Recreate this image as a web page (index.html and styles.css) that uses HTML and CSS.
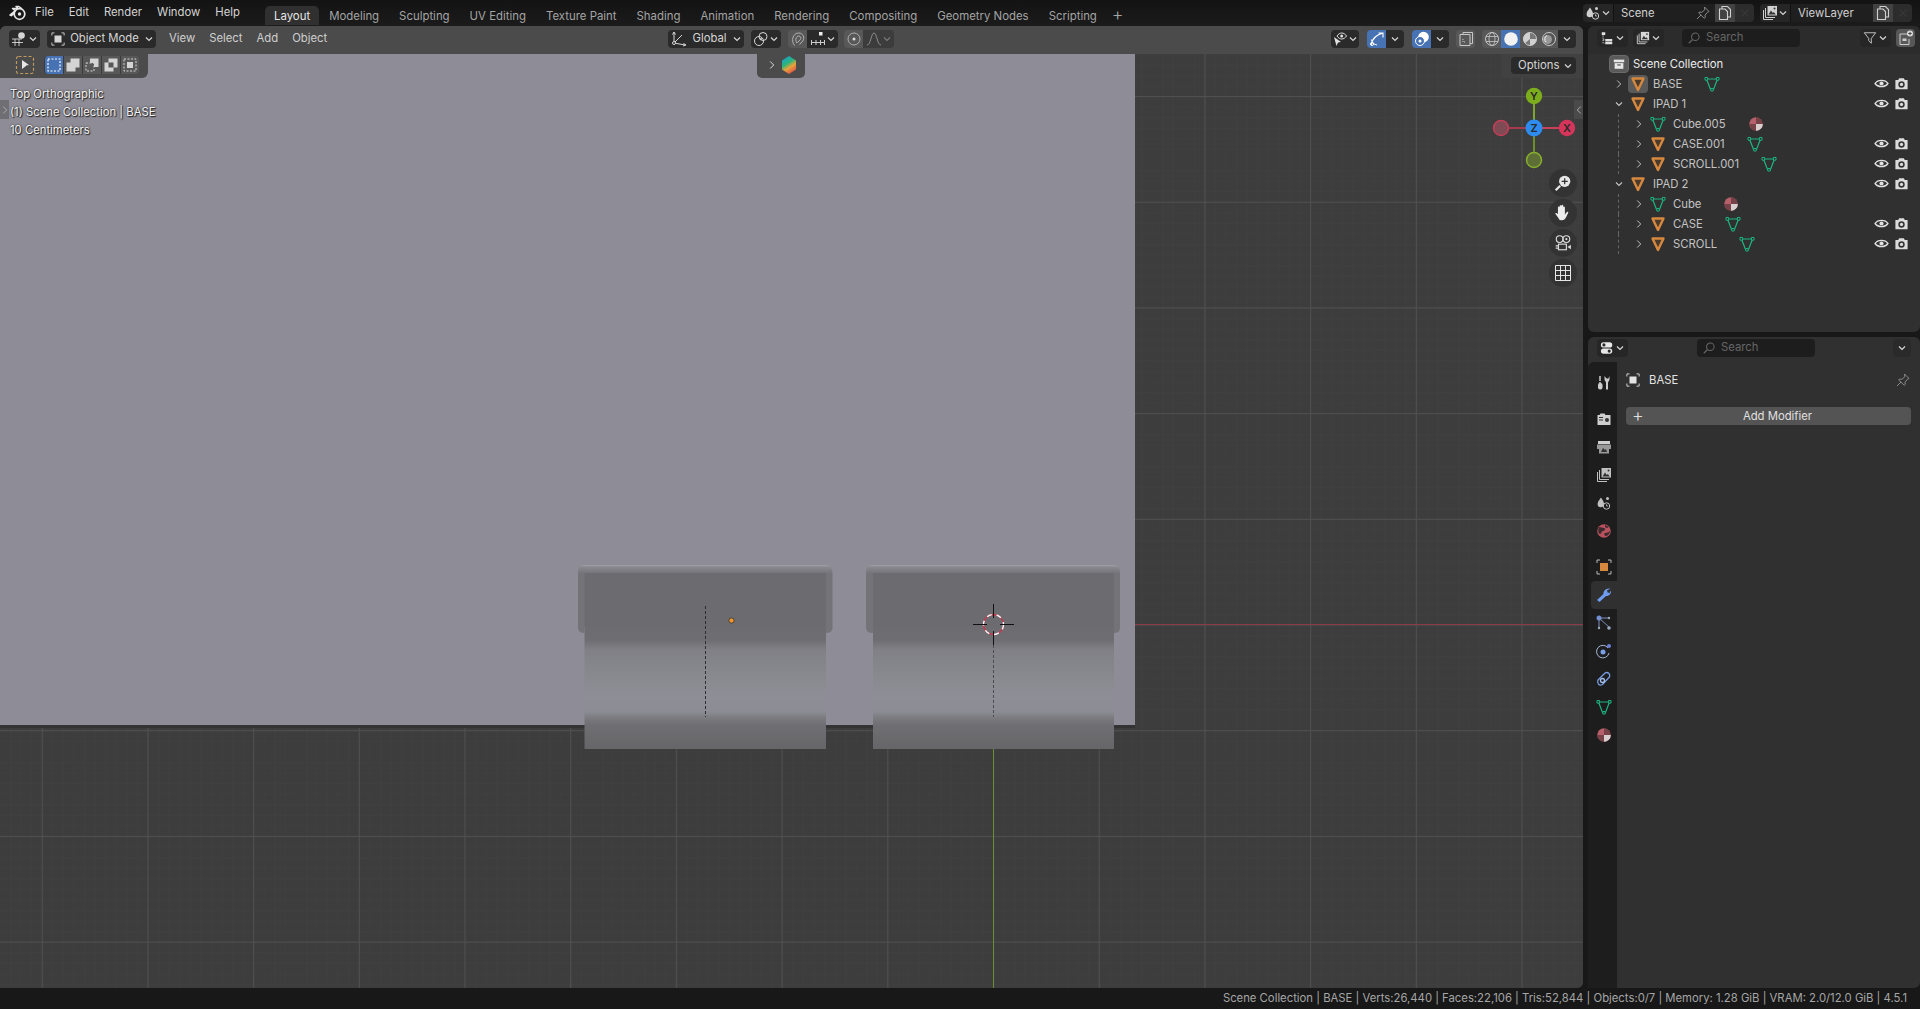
FILE: index.html
```html
<!DOCTYPE html>
<html lang="en">
<head>
    <meta charset="UTF-8">
    <meta name="viewport" content="width=device-width, initial-scale=1.0">
    <title>Blender</title>
    <link rel="stylesheet" href="styles.css">
</head>
<body>
    <svg class="sprites" aria-hidden="true">
        <defs><linearGradient id="hexfill" x1=".25" y1="0" x2=".75" y2="1"><stop offset="0" stop-color="#17a0d0"/><stop offset=".38" stop-color="#2bb57a"/><stop offset=".62" stop-color="#e8a23a"/><stop offset="1" stop-color="#e0484a"/></linearGradient></defs>
        <symbol id="i-logo" viewBox="0 0 18 16"><circle cx="10.500" cy="9" r="5.300" fill="none" stroke="currentColor" stroke-width="1.700"/><circle cx="10.500" cy="9" r="1.700" fill="currentColor"/><path d="M13 3.800L9.800 1.500H7l2.300 2H3.500l2.800 2.200L1 10l1.300.7 3.500-2.800" fill="none" stroke="currentColor" stroke-width="1.500" stroke-linejoin="round"/></symbol>
        <symbol id="i-chev-d" viewBox="0 0 10 10"><path d="M2 3.500l3 3 3-3" fill="none" stroke="currentColor" stroke-width="1.200"/></symbol>
        <symbol id="i-chev-r" viewBox="0 0 10 10"><path d="M3.200 1.500l3.500 3.500-3.500 3.500" fill="none" stroke="currentColor" stroke-width="1"/></symbol>
        <symbol id="i-obj" viewBox="0 0 16 16"><path d="M2.500 2.500h11L8 14z" fill="#4a3a2c" stroke="#d6883f" stroke-width="2.400" stroke-linejoin="round"/></symbol>
        <symbol id="i-mesh" viewBox="0 0 16 16"><path d="M2.500 3h11l-4 10.500h-3z" fill="none" stroke="#1db683" stroke-width="1.200"/><path d="M1 1.500h2.600v2.600H1zM12.400 1.500H15v2.600h-2.600zM6.800 12.500h2.400V15H6.800z" fill="#262626" stroke="#1db683"/></symbol>
        <symbol id="i-mat" viewBox="0 0 16 16"><circle cx="8" cy="8" r="6.800" fill="#b5606a"/><path d="M8 8V1.200A6.800 6.800 0 0 1 14.800 8zM8 8v6.800A6.800 6.800 0 0 1 1.200 8z" fill="#2a1e20" opacity=".45"/><path d="M8 8h6.800A6.800 6.800 0 0 1 8 14.800z" fill="#d8cfd0"/></symbol>
        <symbol id="i-eye" viewBox="0 0 16 16"><path d="M1.200 8C4 3.600 12 3.600 14.800 8 12 12.400 4 12.400 1.200 8z" fill="none" stroke="#e0e0e0" stroke-width="1.500"/><circle cx="8" cy="8" r="2.200" fill="#e0e0e0"/></symbol>
        <symbol id="i-cam" viewBox="0 0 16 16"><path d="M1.500 4.200h3l1-1.700h5l1 1.700h3v10h-13z" fill="#dcdcdc"/><circle cx="8" cy="9" r="3.400" fill="#333"/><circle cx="8" cy="9" r="1.700" fill="#dcdcdc"/></symbol>
        <symbol id="i-search" viewBox="0 0 16 16"><circle cx="9.500" cy="6.500" r="4.300" fill="none" stroke="currentColor" stroke-width="1.200"/><path d="M6.300 9.700L2 14" stroke="currentColor" stroke-width="1.300"/></symbol>
        <symbol id="i-pin" viewBox="0 0 16 16"><path d="M9.500 2l4.500 4.500-1.500.7-2.500 3 .3 2.300-1 .8L3.700 8l.8-1 2.300.3 3-2.500zM6 10l-4 4" fill="none" stroke="currentColor"/></symbol>
        <symbol id="i-copy" viewBox="0 0 16 16"><path d="M5 4V1.500h5.500L13.500 4.500V12H11M2.500 4H8l2.500 2.500v8h-8z" fill="none" stroke="currentColor" stroke-width="1.100"/></symbol>
        <symbol id="i-x" viewBox="0 0 16 16"><path d="M4 4l8 8M12 4l-8 8" stroke="currentColor" stroke-width="1.200"/></symbol>
        <symbol id="i-scene" viewBox="0 0 16 16"><path d="M5 2.500C6.500 5 8 6.500 8 9a3.200 3.200 0 0 1-6.400 0C1.600 6.500 3.500 5 5 2.500z" fill="currentColor"/><circle cx="11.500" cy="3.500" r="1.500" fill="currentColor"/><circle cx="10.500" cy="11" r="3.200" fill="none" stroke="currentColor"/><path d="M10.500 9.300V11h1.500" fill="none" stroke="currentColor" stroke-width=".8"/></symbol>
        <symbol id="i-layer" viewBox="0 0 16 16"><path d="M1.500 5v9.500H11M3.500 3v9.500H13" fill="none" stroke="currentColor"/><path d="M5.500 1h9.500v9.500H5.500z" fill="currentColor"/><path d="M6.500 9.500l2.500-4 1.800 2.500 1-1 2 2.500z" fill="#333"/><circle cx="12.500" cy="3.500" r="1" fill="#333"/></symbol>
        <symbol id="i-viewport" viewBox="0 0 16 16"><path d="M1 11.500h11M4 8v7M1 8l10 0M8 8v7" fill="none" stroke="currentColor" stroke-width=".9"/><circle cx="10.500" cy="4.500" r="3.300" fill="currentColor"/></symbol>
        <symbol id="i-objmode" viewBox="0 0 16 16"><path d="M1 4V1h3M12 1h3v3M15 12v3h-3M4 15H1v-3" fill="none" stroke="currentColor"/><rect x="4" y="4" width="8" height="8" fill="currentColor"/></symbol>
        <symbol id="i-cursor" viewBox="0 0 20 20"><rect x="1.500" y="1.500" width="17" height="17" rx="2" fill="none" stroke="#c09a5e" stroke-width="1.200" stroke-dasharray="3 2"/><path d="M7 5l7 5-3 .5 0 .5-4 3z" fill="#e6e6e6"/></symbol>
        <symbol id="i-sel1" viewBox="0 0 16 16"><rect x="2" y="2" width="12" height="12" fill="none" stroke="#fff" stroke-width="1.200" stroke-dasharray="2 1.500"/></symbol>
        <symbol id="i-sel2" viewBox="0 0 16 16"><path d="M1.500 5.500h4v-4h9v9h-4v4h-9z" fill="#d4d4d4"/></symbol>
        <symbol id="i-sel3" viewBox="0 0 16 16"><path d="M6 1.500h8.500V10H10V6H6z" fill="#d4d4d4"/><rect x="2" y="6" width="8" height="8" fill="none" stroke="#d4d4d4" stroke-dasharray="2 1.500"/></symbol>
        <symbol id="i-sel4" viewBox="0 0 16 16"><path fill-rule="evenodd" d="M1.500 5.500h4v-4h9v9h-4v4h-9zM5.500 5.500v5h5v-5z" fill="#d4d4d4"/></symbol>
        <symbol id="i-sel5" viewBox="0 0 16 16"><rect x="2" y="2" width="12" height="12" fill="none" stroke="#d4d4d4" stroke-dasharray="2 1.500"/><rect x="5" y="5" width="6" height="6" fill="#d4d4d4"/></symbol>
        <symbol id="i-gizmo-axes" viewBox="0 0 16 16"><path d="M3 1.500v10.500l11 2M3 12l8-8" fill="none" stroke="currentColor"/><path d="M1.500 3.500L3 1l1.500 2.500M12.500 12.500l2.500 1.500-3 1" fill="none" stroke="currentColor"/><circle cx="3" cy="12" r="1.500" fill="#2a2a2a" stroke="currentColor"/></symbol>
        <symbol id="i-pivot" viewBox="0 0 16 16"><circle cx="6" cy="10" r="4.500" fill="none" stroke="currentColor"/><circle cx="10" cy="5.500" r="4" fill="none" stroke="currentColor"/><circle cx="8" cy="8" r="1" fill="currentColor"/></symbol>
        <symbol id="i-magnet" viewBox="0 0 16 16"><path d="M4.500 14.500C1 10 2.500 2 8.800 2c4.200 0 6.200 4.500 4 8l-3.300 3.500M7.300 11.800l3-3.200c1.200-1.600.3-3.600-1.600-3.600C6 5 5 8.500 6.800 12" fill="none" stroke="#b4b4b4"/></symbol>
        <symbol id="i-snapinc" viewBox="0 0 16 16"><rect x="9" y="1" width="3.500" height="3.500" fill="#eee"/><path d="M1.500 9v5M1.500 11.500h13M6 9v5M10.500 9v5M14.500 9v5" stroke="#ccc" fill="none"/></symbol>
        <symbol id="i-prop" viewBox="0 0 16 16"><circle cx="8" cy="8" r="6" fill="none" stroke="#b0b0b0"/><circle cx="8" cy="8" r="1.500" fill="#ddd"/></symbol>
        <symbol id="i-falloff" viewBox="0 0 16 16"><path d="M1 14C5 14 5 2 8 2s3 12 7 12" fill="none" stroke="#8a8a8a"/></symbol>
        <symbol id="i-vis" viewBox="0 0 16 16"><path d="M2 6l2.500 9 1.500-3.500 3-.5z" fill="#e0e0e0"/><path d="M5 5c2.500-4 7-4 9.500 0-2.500 4-7 4-9.500 0z" fill="none" stroke="#e0e0e0"/><circle cx="9.700" cy="5" r="1.500" fill="#e0e0e0"/></symbol>
        <symbol id="i-gizmo" viewBox="0 0 16 16"><path d="M2 14C4 6 8 4 14 2M9.500 2H14v4.500M2.500 8.500c.5 3 2.500 5 5.500 5.500" fill="none" stroke="#fff" stroke-width="1.100"/><circle cx="3" cy="13" r="1.500" fill="none" stroke="#fff"/></symbol>
        <symbol id="i-overlay" viewBox="0 0 16 16"><circle cx="9.500" cy="6" r="5.300" fill="#fff"/><circle cx="6" cy="10" r="4.500" fill="#4772b3" stroke="#fff"/><circle cx="6" cy="10" r="1.500" fill="#fff"/></symbol>
        <symbol id="i-xray" viewBox="0 0 16 16"><path d="M5 3.500V1.500h9.500v11H12M2 3.500h10v11H2z" fill="none" stroke="#c8c8c8"/><path d="M5 8v3h3" fill="none" stroke="#c8c8c8" stroke-dasharray="1 1"/></symbol>
        <symbol id="i-wire" viewBox="0 0 16 16"><circle cx="8" cy="8" r="6.500" fill="none" stroke="#c8c8c8"/><ellipse cx="8" cy="8" rx="3" ry="6.500" fill="none" stroke="#c8c8c8" stroke-width=".8"/><path d="M2 5.500h12M2 10.500h12" stroke="#c8c8c8" stroke-width=".8"/></symbol>
        <symbol id="i-solid" viewBox="0 0 16 16"><circle cx="8" cy="8" r="6.800" fill="#f2f2f2"/></symbol>
        <symbol id="i-matprev" viewBox="0 0 16 16"><circle cx="8" cy="8" r="6.500" fill="#777" stroke="#c8c8c8"/><path d="M8 1.500A6.500 6.500 0 0 0 3 12.300L8 8z" fill="#d0d0d0"/><path d="M8 8h6.500A6.500 6.500 0 0 1 8 14.500z" fill="#d0d0d0"/></symbol>
        <symbol id="i-render" viewBox="0 0 16 16"><circle cx="8" cy="8" r="6.500" fill="#555" stroke="#c8c8c8"/><circle cx="6.500" cy="8.500" r="4.500" fill="#999"/><path d="M6 4.500A4 4 0 0 0 5 11" fill="none" stroke="#eee"/></symbol>
        <symbol id="i-zoom" viewBox="0 0 16 16"><circle cx="9.500" cy="6.500" r="5" fill="#e6e6e6"/><path d="M9.500 3.800v5.400M6.800 6.500h5.400" stroke="#2f2f2f" stroke-width="1.100"/><path d="M5.500 10.500L1.500 14.500" stroke="#e6e6e6" stroke-width="2"/></symbol>
        <symbol id="i-hand" viewBox="0 0 16 16"><path d="M4.500 13C3 11.500 1.800 9.500 1 8.500c.5-1 1.500-.7 2.500.5V3c0-1 1.500-1 1.500 0v3.500V1.800c0-1 1.600-1 1.600 0v4.700V1.500c0-1 1.600-1 1.600 0v5V3c0-1 1.500-1 1.500 0v6.500c.5-1 1-2 2-2.500 1-.2 1.200.5.800 1.200-1 1.800-1.800 4-3 5.300-1.500 1.200-4 1.300-5.500-.5z" fill="#ececec"/></symbol>
        <symbol id="i-vcam" viewBox="0 0 16 16"><circle cx="5" cy="4.500" r="3" fill="none" stroke="#ddd"/><circle cx="11" cy="4.500" r="3" fill="none" stroke="#ddd"/><circle cx="11" cy="4.500" r="1" fill="#ddd"/><rect x="4" y="9" width="7" height="5" fill="none" stroke="#ddd"/><path d="M1.500 10.500H4M1.500 12.500H4" stroke="#ddd"/><path d="M15 9.500v4l-3-2z" fill="#ddd"/></symbol>
        <symbol id="i-grid" viewBox="0 0 16 16"><path d="M.5.500h15v15H.5zM5.500.500v15M10.500.500v15M.5 5.500h15M.5 10.500h15" fill="none" stroke="#e6e6e6"/></symbol>
        <symbol id="i-outliner" viewBox="0 0 16 16"><path d="M2 1.500h4v3H2zM6 9h8v3H6zM6 12.500h8v2.500H6z" fill="#e0e0e0"/><path d="M3.500 5v9H5M3.500 10H5" fill="none" stroke="#e0e0e0" stroke-dasharray="1.500 1"/></symbol>
        <symbol id="i-filter" viewBox="0 0 16 16"><path d="M1.500 2h13L9.500 8.500V14l-3-3V8.500z" fill="none" stroke="#d4d4d4"/></symbol>
        <symbol id="i-newcol" viewBox="0 0 16 16"><path d="M2 4h9M2 4v10.500h9V9" fill="none" stroke="#ccc"/><path d="M4.500 8.500h4V11h-4z" fill="#ccc"/><circle cx="12" cy="3.500" r="3" fill="#ddd"/><path d="M12 1.800v3.400M10.300 3.500h3.400" stroke="#444"/></symbol>
        <symbol id="i-collection" viewBox="0 0 16 16"><path d="M2 3h12v3H2z" fill="#e6e6e6"/><path d="M3 7h10v6.500H3z" fill="#e6e6e6"/><rect x="6" y="8.500" width="4" height="1.200" fill="#444"/></symbol>
        <symbol id="i-props" viewBox="0 0 16 16"><rect x="1" y="1.500" width="13" height="6" rx="3" fill="#e8e8e8"/><rect x="1" y="8.500" width="13" height="6" rx="3" fill="#e8e8e8"/><circle cx="4.500" cy="4.500" r="1.800" fill="#2a2a2a"/><circle cx="10.500" cy="11.500" r="1.800" fill="#2a2a2a"/></symbol>
        <symbol id="i-tool" viewBox="0 0 16 16"><path d="M4 1v5M4 10V7" stroke="#ccc" stroke-width="1.500"/><rect x="2" y="8" width="4.500" height="6.500" rx="2" fill="#ccc"/><path d="M8.500 1v3c0 2 1.500 2.500 1.500 3.500v7h2v-7c0-1 1.500-1.500 1.500-3.500V1L12.300 3.500h-1.800z" fill="#ccc"/></symbol>
        <symbol id="i-trender" viewBox="0 0 16 16"><path d="M1.500 4h2l1-1.500h4L9.500 4h5v10h-13z" fill="#cfcfcf"/><rect x="3" y="6" width="4" height="1" fill="#333"/><rect x="3" y="8.500" width="4" height="1" fill="#333"/><circle cx="11" cy="9" r="2" fill="#333"/></symbol>
        <symbol id="i-toutput" viewBox="0 0 16 16"><path d="M2 2h12v3H2z" fill="#cfcfcf"/><path d="M1 5.500h14V10h-2v4.500H3V10H1z" fill="#999"/><path d="M5 13l2-4 2 2 1-1 1 3z" fill="#333"/></symbol>
        <symbol id="i-world" viewBox="0 0 16 16"><circle cx="8" cy="8" r="6.800" fill="#b9525e"/><path d="M3 4c2 0 3 1 5 1s1 3-1 3-1 3-3 3-2-5-1-7zM9 10c2 0 4-1 5-2 0 2-2 5-4 5s-2-3-1-3zM9 2c1 1 3 1 4 2l-2 1-2-1z" fill="#3a2a2e"/></symbol>
        <symbol id="i-tobj" viewBox="0 0 16 16"><path d="M1 4V1h3M12 1h3v3M15 12v3h-3M4 15H1v-3" fill="none" stroke="#bbb"/><rect x="4" y="4" width="8" height="8" fill="#d6883f"/></symbol>
        <symbol id="i-wrench" viewBox="0 0 16 16"><path d="M14.500 1.500L11 3.500l.5 2 2 .5 1.500-2.500c.5 3-2 6-5 5.500L3.500 15 1 13l6.500-6C7 4 10 .8 14.500 1.500z" fill="#6f9cf0"/></symbol>
        <symbol id="i-part" viewBox="0 0 16 16"><circle cx="3" cy="3" r="2.500" fill="#6f8fd8"/><path d="M3 3l10 9M3 3v10M3 3h9" stroke="#7f8fc0"/><circle cx="13" cy="3" r="1.200" fill="#9ab"/><circle cx="13" cy="13" r="1.800" fill="#9ab"/><circle cx="3" cy="13" r="1.200" fill="#9ab"/></symbol>
        <symbol id="i-phys" viewBox="0 0 16 16"><circle cx="7" cy="9" r="2.500" fill="#7aa0e8"/><path d="M12 5a6.300 6.300 0 1 0 1 5" fill="none" stroke="#a7b4d4"/><circle cx="13" cy="3" r="2" fill="#6a80d8"/></symbol>
        <symbol id="i-cons" viewBox="0 0 16 16"><path d="M2 9l7-7c3-1.500 5.500 1 4.500 4l-7 7.500C3 15.500.8 12 2 9z" fill="none" stroke="#7aa0e8" stroke-width="1.300"/><circle cx="6.500" cy="9.500" r="2" fill="none" stroke="#a7c0ea" stroke-width="1.300"/></symbol>
        <symbol id="i-hex" viewBox="0 0 16 18"><path d="M8 0l7 4.500v9L8 18l-7-4.500v-9z" fill="url(#hexfill)"/></symbol>
    </svg>

    <header class="topbar">
        <svg class="logo"><use href="#i-logo"/></svg>
        <nav class="menus">
            <span>File</span><span>Edit</span><span>Render</span><span>Window</span><span>Help</span>
        </nav>
        <nav class="tabs">
            <span class="tab active">Layout</span>
            <span class="tab">Modeling</span>
            <span class="tab">Sculpting</span>
            <span class="tab">UV Editing</span>
            <span class="tab">Texture Paint</span>
            <span class="tab">Shading</span>
            <span class="tab">Animation</span>
            <span class="tab">Rendering</span>
            <span class="tab">Compositing</span>
            <span class="tab">Geometry Nodes</span>
            <span class="tab">Scripting</span>
            <span class="tab-add">+</span>
        </nav>
        <div class="scene-fields">
            <div class="field-group scene-group">
                <span class="fg-icon"><svg class="ic16"><use href="#i-scene"/></svg><svg class="ic10"><use href="#i-chev-d"/></svg></span>
                <span class="fg-name">Scene</span>
                <svg class="ic16 pin-ic"><use href="#i-pin"/></svg>
                <span class="fg-copy"><svg class="ic16"><use href="#i-copy"/></svg></span>
                <span class="fg-x"><svg class="ic14"><use href="#i-x"/></svg></span>
            </div>
            <div class="field-group layer-group">
                <span class="fg-icon"><svg class="ic16"><use href="#i-layer"/></svg><svg class="ic10"><use href="#i-chev-d"/></svg></span>
                <span class="fg-name">ViewLayer</span>
                <span class="fg-copy"><svg class="ic16"><use href="#i-copy"/></svg></span>
                <span class="fg-x"><svg class="ic14"><use href="#i-x"/></svg></span>
            </div>
        </div>
    </header>

    <main class="workspace">
        <section class="viewport">
            <svg class="scene" viewBox="0 26 1583 962" preserveAspectRatio="none">
                <defs>
                    <pattern id="gridMinor" patternUnits="userSpaceOnUse" x="993" y="624.500" width="10.570" height="10.570">
                        <rect width="1" height="10.570" fill="#3f3f3f"/>
                        <rect width="10.570" height="1" fill="#3f3f3f"/>
                    </pattern>
                    <pattern id="gridMajor" patternUnits="userSpaceOnUse" x="993" y="624.500" width="105.700" height="105.700">
                        <rect width="1" height="105.700" fill="#505050"/>
                        <rect width="105.700" height="1" fill="#505050"/>
                    </pattern>
                    <linearGradient id="capFill" x1="0" y1="0" x2="0" y2="1">
                        <stop offset="0" stop-color="#a2a2a8"/>
                        <stop offset=".03" stop-color="#88888e"/>
                        <stop offset=".13" stop-color="#737378"/>
                        <stop offset="1" stop-color="#737378"/>
                    </linearGradient>
                    <linearGradient id="bodyFill" x1="0" y1="0" x2="0" y2="1">
                        <stop offset="0" stop-color="#6c6c70"/>
                        <stop offset=".187" stop-color="#6e6e72"/>
                        <stop offset=".26" stop-color="#808086"/>
                        <stop offset=".45" stop-color="#88888f"/>
                        <stop offset=".6" stop-color="#8e8e96"/>
                        <stop offset=".72" stop-color="#8c8c94"/>
                        <stop offset=".77" stop-color="#7a7a7f"/>
                        <stop offset=".82" stop-color="#6f6f73"/>
                        <stop offset="1" stop-color="#666669"/>
                    </linearGradient>
                </defs>
                <rect x="0" y="26" width="1583" height="962" fill="#3d3d3d"/>
                <rect x="0" y="26" width="1583" height="962" fill="url(#gridMinor)"/>
                <rect x="0" y="26" width="1583" height="962" fill="url(#gridMajor)"/>
                <rect x="1135" y="624" width="448" height="1" fill="#8c3a47"/>
                <rect x="993" y="726" width="1" height="262" fill="#6b8f2c"/>
                <rect x="0" y="54" width="1135" height="672" fill="#8e8d97"/>
                <rect x="0" y="725" width="1135" height="3" fill="#333"/>

                <g>
                    <rect x="584.500" y="615" width="241.500" height="134" fill="url(#bodyFill)"/>
                    <path d="M578 572q0-7 7-7h240q7 0 7.500 7v56q0 5-6.500 5v-7H584.500v7q-6.500 0-6.500-5z" fill="url(#capFill)"/>
                    <rect x="584.500" y="573" width="241.500" height="54" fill="#6c6c70"/>
                    <path d="M705.500 606v111" stroke="#2e2e30" stroke-dasharray="3 2"/>
                </g>
                <g>
                    <rect x="873" y="615" width="241" height="134" fill="url(#bodyFill)"/>
                    <path d="M866 572q0-7 7-7h240q7 0 7 7v56q0 5-6 5v-7H873v7q-7 0-7-5z" fill="url(#capFill)"/>
                    <rect x="873" y="573" width="241" height="54" fill="#6c6c70"/>
                    <path d="M993.500 640v77" stroke="#4c4c50" stroke-dasharray="3 2"/>
                </g>
                <circle cx="731.500" cy="620.500" r="2.600" fill="#f0962e" stroke="#2a2a2a" stroke-width=".7"/>
                <circle cx="993.500" cy="624.500" r="10" fill="none" stroke="#c33a4e" stroke-width="1.400"/>
                <circle cx="993.500" cy="624.500" r="10" fill="none" stroke="#fff" stroke-width="1.400" stroke-dasharray="5 5"/>
                <path d="M973 624.500h14M1000 624.500h14M993.500 604v14M993.500 631v14" stroke="#111"/>
            </svg>

            <div class="view-header">
                <span class="btn editor-btn"><svg class="ic16"><use href="#i-viewport"/></svg><svg class="ic10"><use href="#i-chev-d"/></svg></span>
                <span class="btn mode-btn"><svg class="ic14"><use href="#i-objmode"/></svg><span class="grow">Object Mode</span><svg class="ic10"><use href="#i-chev-d"/></svg></span>
                <nav class="view-menus"><span>View</span><span>Select</span><span>Add</span><span>Object</span></nav>
                <span class="btn global-btn"><svg class="ic16"><use href="#i-gizmo-axes"/></svg><span class="grow">Global</span><svg class="ic10"><use href="#i-chev-d"/></svg></span>
                <span class="btn pivot-btn"><svg class="ic16"><use href="#i-pivot"/></svg><svg class="ic10"><use href="#i-chev-d"/></svg></span>
                <span class="btn-join snap-group">
                    <span class="btn lighter sq"><svg class="ic16"><use href="#i-magnet"/></svg></span>
                    <span class="btn snap-inc"><svg class="ic16"><use href="#i-snapinc"/></svg><svg class="ic10"><use href="#i-chev-d"/></svg></span>
                </span>
                <span class="btn-join prop-group">
                    <span class="btn lighter sq"><svg class="ic16"><use href="#i-prop"/></svg></span>
                    <span class="btn dim snap-inc"><svg class="ic16"><use href="#i-falloff"/></svg><svg class="ic10 faint"><use href="#i-chev-d"/></svg></span>
                </span>
                <span class="grow"></span>
                <span class="btn vis-btn"><svg class="ic16"><use href="#i-vis"/></svg><svg class="ic10"><use href="#i-chev-d"/></svg></span>
                <span class="btn-join gizmo-group">
                    <span class="btn blue sq"><svg class="ic16"><use href="#i-gizmo"/></svg></span>
                    <span class="btn arrow"><svg class="ic10"><use href="#i-chev-d"/></svg></span>
                </span>
                <span class="btn-join overlay-group">
                    <span class="btn blue sq"><svg class="ic16"><use href="#i-overlay"/></svg></span>
                    <span class="btn arrow"><svg class="ic10"><use href="#i-chev-d"/></svg></span>
                </span>
                <span class="btn lighter sq xray"><svg class="ic16"><use href="#i-xray"/></svg></span>
                <span class="btn-join shading-group">
                    <span class="btn lighter sq"><svg class="ic16"><use href="#i-wire"/></svg></span>
                    <span class="btn blue sq"><svg class="ic16"><use href="#i-solid"/></svg></span>
                    <span class="btn lighter sq"><svg class="ic16"><use href="#i-matprev"/></svg></span>
                    <span class="btn lighter sq"><svg class="ic16"><use href="#i-render"/></svg></span>
                    <span class="btn arrow"><svg class="ic10"><use href="#i-chev-d"/></svg></span>
                </span>
            </div>

            <div class="tool-panel">
                <svg class="tool-ic"><use href="#i-cursor"/></svg>
                <span class="btn-join">
                    <span class="btn blue sel"><svg class="ic16"><use href="#i-sel1"/></svg></span>
                    <span class="btn lighter sel"><svg class="ic16"><use href="#i-sel2"/></svg></span>
                    <span class="btn lighter sel"><svg class="ic16"><use href="#i-sel3"/></svg></span>
                    <span class="btn lighter sel"><svg class="ic16"><use href="#i-sel4"/></svg></span>
                    <span class="btn lighter sel"><svg class="ic16"><use href="#i-sel5"/></svg></span>
                </span>
            </div>

            <div class="addon-pop">
                <svg class="ic10"><use href="#i-chev-r"/></svg>
                <svg class="hex-ic"><use href="#i-hex"/></svg>
            </div>

            <div class="options-panel"><span class="btn options-btn"><span class="grow">Options</span><svg class="ic10"><use href="#i-chev-d"/></svg></span></div>

            <div class="view-info">
                <div>Top Orthographic</div>
                <div>(1) Scene Collection | BASE</div>
                <div>10 Centimeters</div>
            </div>
            <span class="edge-tab left-tab"><svg class="ic10"><use href="#i-chev-r"/></svg></span>
            <span class="edge-tab right-tab"><svg class="ic10 flip"><use href="#i-chev-r"/></svg></span>

            <svg class="nav-gizmo" viewBox="0 0 84 100">
                <path d="M42 42H10" stroke="#a63a4c" stroke-width="2"/>
                <path d="M42 42h32" stroke="#c8405a" stroke-width="2"/>
                <path d="M42 42V10" stroke="#7da62a" stroke-width="2"/>
                <path d="M42 42v32" stroke="#6d8f28" stroke-width="2"/>
                <circle cx="9" cy="42" r="7.500" fill="#7f4a53" stroke="#c43e58" stroke-width="1.500"/>
                <circle cx="42" cy="74" r="7.500" fill="#5d6f36" stroke="#86ae2c" stroke-width="1.500"/>
                <circle cx="75" cy="42" r="8.200" fill="#d5355a"/>
                <circle cx="42" cy="10" r="8.200" fill="#7cae1c"/>
                <circle cx="42" cy="42" r="8.500" fill="#2e8cf0"/>
                <text x="75" y="46" class="axis-label">X</text>
                <text x="42" y="14" class="axis-label">Y</text>
                <text x="42" y="46" class="axis-label">Z</text>
            </svg>

            <div class="nav-buttons">
                <span class="nav-btn"><svg class="ic18"><use href="#i-zoom"/></svg></span>
                <span class="nav-btn"><svg class="ic18"><use href="#i-hand"/></svg></span>
                <span class="nav-btn"><svg class="ic18"><use href="#i-vcam"/></svg></span>
                <span class="nav-btn"><svg class="ic16"><use href="#i-grid"/></svg></span>
            </div>
        </section>

        <aside class="side">
            <section class="outliner">
                <div class="panel-head">
                    <span class="btn editor-btn small"><svg class="ic14"><use href="#i-outliner"/></svg><svg class="ic10"><use href="#i-chev-d"/></svg></span>
                    <span class="btn editor-btn small"><svg class="ic14"><use href="#i-layer"/></svg><svg class="ic10"><use href="#i-chev-d"/></svg></span>
                    <span class="search outliner-search"><svg class="ic14"><use href="#i-search"/></svg>Search</span>
                    <span class="grow"></span>
                    <span class="btn editor-btn small"><svg class="ic14"><use href="#i-filter"/></svg><svg class="ic10"><use href="#i-chev-d"/></svg></span>
                    <span class="btn lighter sq"><svg class="ic16"><use href="#i-newcol"/></svg></span>
                </div>
                <ul class="tree">
                    <li class="row root"><span class="col-ic"><svg class="ic14"><use href="#i-collection"/></svg></span><span class="bright">Scene Collection</span></li>
                    <li class="row lvl1"><svg class="ic10 chev"><use href="#i-chev-r"/></svg><span class="obj-ic picked"><svg class="ic14"><use href="#i-obj"/></svg></span><span class="name">BASE</span><svg class="ic14 extra"><use href="#i-mesh"/></svg><span class="row-end"><svg class="ic14"><use href="#i-eye"/></svg><svg class="ic14"><use href="#i-cam"/></svg></span></li>
                    <li class="row lvl1"><svg class="ic10 chev"><use href="#i-chev-d"/></svg><span class="obj-ic"><svg class="ic14"><use href="#i-obj"/></svg></span><span class="name">IPAD 1</span><span class="row-end"><svg class="ic14"><use href="#i-eye"/></svg><svg class="ic14"><use href="#i-cam"/></svg></span></li>
                    <li class="row lvl2 first"><svg class="ic10 chev"><use href="#i-chev-r"/></svg><span class="obj-ic"><svg class="ic14"><use href="#i-mesh"/></svg></span><span class="name">Cube.005</span><svg class="ic14 extra"><use href="#i-mat"/></svg></li>
                    <li class="row lvl2"><svg class="ic10 chev"><use href="#i-chev-r"/></svg><span class="obj-ic"><svg class="ic14"><use href="#i-obj"/></svg></span><span class="name">CASE.001</span><svg class="ic14 extra"><use href="#i-mesh"/></svg><span class="row-end"><svg class="ic14"><use href="#i-eye"/></svg><svg class="ic14"><use href="#i-cam"/></svg></span></li>
                    <li class="row lvl2"><svg class="ic10 chev"><use href="#i-chev-r"/></svg><span class="obj-ic"><svg class="ic14"><use href="#i-obj"/></svg></span><span class="name">SCROLL.001</span><svg class="ic14 extra"><use href="#i-mesh"/></svg><span class="row-end"><svg class="ic14"><use href="#i-eye"/></svg><svg class="ic14"><use href="#i-cam"/></svg></span></li>
                    <li class="row lvl1"><svg class="ic10 chev"><use href="#i-chev-d"/></svg><span class="obj-ic"><svg class="ic14"><use href="#i-obj"/></svg></span><span class="name">IPAD 2</span><span class="row-end"><svg class="ic14"><use href="#i-eye"/></svg><svg class="ic14"><use href="#i-cam"/></svg></span></li>
                    <li class="row lvl2 first"><svg class="ic10 chev"><use href="#i-chev-r"/></svg><span class="obj-ic"><svg class="ic14"><use href="#i-mesh"/></svg></span><span class="name">Cube</span><svg class="ic14 extra"><use href="#i-mat"/></svg></li>
                    <li class="row lvl2"><svg class="ic10 chev"><use href="#i-chev-r"/></svg><span class="obj-ic"><svg class="ic14"><use href="#i-obj"/></svg></span><span class="name">CASE</span><svg class="ic14 extra"><use href="#i-mesh"/></svg><span class="row-end"><svg class="ic14"><use href="#i-eye"/></svg><svg class="ic14"><use href="#i-cam"/></svg></span></li>
                    <li class="row lvl2"><svg class="ic10 chev"><use href="#i-chev-r"/></svg><span class="obj-ic"><svg class="ic14"><use href="#i-obj"/></svg></span><span class="name">SCROLL</span><svg class="ic14 extra"><use href="#i-mesh"/></svg><span class="row-end"><svg class="ic14"><use href="#i-eye"/></svg><svg class="ic14"><use href="#i-cam"/></svg></span></li>
                </ul>
            </section>

            <section class="properties">
                <div class="panel-head props-head">
                    <span class="btn editor-btn small"><svg class="ic14"><use href="#i-props"/></svg><svg class="ic10"><use href="#i-chev-d"/></svg></span>
                    <span class="search props-search"><svg class="ic14"><use href="#i-search"/></svg>Search</span>
                    <span class="grow"></span>
                    <span class="btn arrow"><svg class="ic10"><use href="#i-chev-d"/></svg></span>
                </div>
                <div class="props-body">
                    <div class="prop-tabs">
                        <span class="ptab"><svg class="ic16"><use href="#i-tool"/></svg></span>
                        <span class="ptab gap"><svg class="ic16"><use href="#i-trender"/></svg></span>
                        <span class="ptab"><svg class="ic16"><use href="#i-toutput"/></svg></span>
                        <span class="ptab"><svg class="ic16"><use href="#i-layer"/></svg></span>
                        <span class="ptab"><svg class="ic16"><use href="#i-scene"/></svg></span>
                        <span class="ptab"><svg class="ic16"><use href="#i-world"/></svg></span>
                        <span class="ptab gap"><svg class="ic16"><use href="#i-tobj"/></svg></span>
                        <span class="ptab active"><svg class="ic16"><use href="#i-wrench"/></svg></span>
                        <span class="ptab"><svg class="ic16"><use href="#i-part"/></svg></span>
                        <span class="ptab"><svg class="ic16"><use href="#i-phys"/></svg></span>
                        <span class="ptab"><svg class="ic16"><use href="#i-cons"/></svg></span>
                        <span class="ptab"><svg class="ic16"><use href="#i-mesh"/></svg></span>
                        <span class="ptab"><svg class="ic16"><use href="#i-mat"/></svg></span>
                    </div>
                    <div class="prop-main">
                        <div class="crumb">
                            <svg class="ic14"><use href="#i-objmode"/></svg>
                            <span class="grow crumb-name">BASE</span>
                            <svg class="ic16 pin-ic"><use href="#i-pin"/></svg>
                        </div>
                        <div class="add-mod"><span class="plus">+</span><span class="add-label">Add Modifier</span></div>
                    </div>
                </div>
            </section>
        </aside>
    </main>

    <footer class="status">Scene Collection | BASE | Verts:26,440 | Faces:22,106 | Tris:52,844 | Objects:0/7 | Memory: 1.28 GiB | VRAM: 2.0/12.0 GiB | 4.5.1</footer>
</body>
</html>
```

FILE: styles.css
```css
* {
    box-sizing: border-box;
}
html, body {
    margin: 0;
    height: 100%;
    overflow: hidden;
}
body {
    display: flex;
    flex-direction: column;
    height: 1009px;
    background-color: #181818;
    color: #c8c8c8;
    font-family: Inter, "Liberation Sans", sans-serif;
    font-size: 11.300px;
    line-height: 1;
}
svg {
    flex: none;
}
.sprites {
    position: absolute;
    width: 0;
    height: 0;
}
.grow {
    flex: 1;
    white-space: nowrap;
}
.ic10 { width: 10px; height: 10px; }
.ic14 { width: 14px; height: 14px; }
.ic16 { width: 16px; height: 16px; }
.ic18 { width: 18px; height: 18px; }
.faint { opacity: 0.4; }
.flip { transform: scaleX(-1); }

/* top bar */
.topbar {
    display: flex;
    align-items: flex-start;
    height: 26px;
    flex: none;
    background: linear-gradient(#131313, #1b1b1b);
}
.logo {
    width: 18px;
    height: 16px;
    margin: 5px 0 0 9px;
    color: #e8e8e8;
}
.menus {
    display: flex;
    gap: 15px;
    margin: 7px 0 0 8px;
    color: #d4d4d4;
}
.tabs {
    display: flex;
    position: absolute;
    left: 265px;
    top: 0;
    align-items: flex-end;
    height: 25px;
    padding-top: 6px;
    color: #a4a4a4;
    font-size: 11.400px;
}
.tab {
    height: 19px;
    padding: 5px 10px 0;
    border-radius: 5px 5px 0 0;
}
.tab.active {
    background-color: #303030;
    color: #e6e6e6;
    padding: 5px 9px 0;
}
.tab-add {
    margin-left: 5px;
    font-size: 18px;
    font-weight: 300;
    height: 19px;
}
.scene-fields {
    display: flex;
    gap: 6px;
    margin: 4px 8px 0 auto;
}
.field-group {
    display: flex;
    align-items: center;
    height: 18px;
    border-radius: 4px;
    background-color: #1f1f1f;
    color: #d0d0d0;
}
.scene-group { width: 171px; }
.layer-group { width: 152px; }
.fg-icon {
    display: flex;
    align-items: center;
    justify-content: center;
    width: 31px;
    height: 18px;
    background-color: #262626;
    border-radius: 4px 0 0 4px;
    border-right: 1px solid #111;
}
.fg-name {
    flex: 1;
    padding: 1px 0 0 7px;
}
.fg-copy {
    display: flex;
    align-items: center;
    justify-content: center;
    width: 20px;
    height: 18px;
    background-color: #424242;
}
.fg-x {
    display: flex;
    align-items: center;
    justify-content: center;
    width: 19px;
    height: 18px;
    color: #3c3c3c;
    background-color: #2c2c2c;
    border-radius: 0 4px 4px 0;
}
.pin-ic {
    color: #8a8a8a;
    margin-right: 4px;
}

/* main areas */
.workspace {
    display: flex;
    flex: 1;
    min-height: 0;
    gap: 5px;
}
.viewport {
    position: relative;
    width: 1583px;
    flex: none;
    overflow: hidden;
    border-radius: 6px 6px 6px 0;
    background-color: #3d3d3d;
}
.scene {
    position: absolute;
    left: 0;
    top: 0;
    width: 100%;
    height: 100%;
}
.view-header {
    position: relative;
    display: flex;
    align-items: center;
    height: 28px;
    padding: 0 7px 3px 9px;
    background-color: #4b4b4b;
    color: #d4d4d4;
}
.btn {
    display: inline-flex;
    align-items: center;
    justify-content: center;
    height: 18px;
    border-radius: 4px;
    background-color: #2a2a2a;
    color: #d6d6d6;
}
.btn.lighter { background-color: #585858; }
.btn.blue { background-color: #4772b3; }
.btn.dim { background-color: #3c3c3c; }
.btn.sq { width: 19px; }
.btn.arrow { width: 18px; }
.btn-join {
    display: inline-flex;
}
.btn-join .btn {
    border-radius: 0;
}
.btn-join .btn:first-child { border-radius: 4px 0 0 4px; }
.btn-join .btn:last-child { border-radius: 0 4px 4px 0; }
.editor-btn {
    width: 31px;
    gap: 1px;
}
.mode-btn {
    width: 109px;
    margin-left: 7px;
    padding: 0 4px 0 6px;
    gap: 5px;
}
.view-menus {
    display: flex;
    gap: 14px;
    width: 499px;
    margin-left: 13px;
    color: #cfcfcf;
}
.global-btn {
    width: 76px;
    padding: 0 3px 0 4px;
    gap: 5px;
}
.pivot-btn {
    width: 30px;
    margin-left: 7px;
}
.snap-group {
    margin-left: 7px;
}
.snap-inc {
    width: 31px;
}
.prop-group {
    margin-left: 6px;
}
.vis-btn {
    width: 28px;
}
.gizmo-group { margin-left: 8px; }
.overlay-group { margin-left: 8px; }
.xray { margin-left: 7px; }
.shading-group { margin-left: 7px; }
.tool-panel {
    position: absolute;
    left: 0;
    top: 28px;
    display: flex;
    align-items: center;
    width: 148px;
    height: 24px;
    padding: 0 0 2px 15px;
    background-color: #4b4b4b;
    border-radius: 0 0 6px 0;
}
.tool-ic {
    width: 20px;
    height: 20px;
    margin-right: 9px;
}
.sel {
    width: 19px;
    border-left: 1px solid #3a3a3a;
}
.addon-pop {
    position: absolute;
    left: 757px;
    top: 28px;
    display: flex;
    align-items: center;
    gap: 4px;
    width: 48px;
    height: 24px;
    padding: 0 0 2px 10px;
    background-color: #4b4b4b;
    border-radius: 0 0 5px 5px;
    color: #ddd;
}
.hex-ic {
    width: 16px;
    height: 18px;
}
.options-panel {
    position: absolute;
    right: 0;
    top: 28px;
    display: flex;
    justify-content: flex-end;
    width: 81px;
    height: 24px;
    padding: 3px 7px 0 0;
    background-color: #414141;
}
.options-btn {
    width: 65px;
    height: 17px;
    padding: 0 3px 0 7px;
}
.view-info {
    position: absolute;
    left: 10px;
    top: 63px;
    display: flex;
    flex-direction: column;
    gap: 6.700px;
    color: #f4f4f4;
    text-shadow: 0 0 2px #222, 1px 1px 1px #222;
}
.edge-tab {
    position: absolute;
    display: flex;
    align-items: center;
    justify-content: center;
    width: 9px;
    height: 19px;
    background-color: #6f6f73;
    color: #aaa;
}
.left-tab {
    left: 0;
    top: 74px;
}
.right-tab {
    right: 0;
    top: 74px;
    background-color: #4a4a4a;
}
.nav-gizmo {
    position: absolute;
    left: 1492px;
    top: 60px;
    width: 84px;
    height: 100px;
}
.axis-label {
    font: 600 11px Inter, sans-serif;
    fill: #2a2a2a;
    text-anchor: middle;
}
.nav-buttons {
    position: absolute;
    left: 1549px;
    top: 143px;
    display: flex;
    flex-direction: column;
    gap: 2px;
}
.nav-btn {
    display: flex;
    align-items: center;
    justify-content: center;
    width: 28px;
    height: 28px;
    border-radius: 50%;
    background-color: #333;
}

/* right side */
.side {
    display: flex;
    flex-direction: column;
    flex: 1;
    gap: 5px;
    min-width: 0;
}
.outliner {
    height: 306px;
    background-color: #303030;
    border-radius: 6px;
}
.panel-head {
    display: flex;
    align-items: center;
    gap: 5px;
    height: 28px;
    padding: 0 5px 4px 9px;
    background-color: #2c2c2c;
    border-radius: 6px 6px 0 0;
}
.btn.small {
    width: 31px;
    background-color: #262626;
}
.search {
    display: flex;
    align-items: center;
    gap: 5px;
    height: 18px;
    padding-left: 5px;
    border-radius: 4px;
    background-color: #1d1d1d;
    color: #666;
}
.outliner-search {
    width: 118px;
    margin-left: 13px;
}
.tree {
    margin: 0;
    padding: 0;
    list-style: none;
}
.row {
    position: relative;
    display: flex;
    align-items: center;
    height: 20px;
    color: #c4c4c4;
}
.root {
    padding-left: 21px;
}
.col-ic {
    display: flex;
    align-items: center;
    justify-content: center;
    width: 20px;
    height: 18px;
    margin-right: 4px;
    background-color: #5a5a5a;
    border-radius: 4px;
    border: 1px solid #6a6a6a;
}
.bright {
    margin-top: 2px;
    color: #ececec;
}
.name {
    margin-top: 2px;
}
.lvl1 { padding-left: 26px; }
.lvl2 { padding-left: 46px; }
.chev {
    margin-right: 4px;
    color: #c0c0c0;
}
.obj-ic {
    display: flex;
    align-items: center;
    justify-content: center;
    width: 20px;
    height: 18px;
    margin-right: 5px;
}
.obj-ic.picked {
    background-color: #5a5a5a;
    border-radius: 4px;
}
.obj-ic svg {
    width: 16px;
    height: 16px;
}
.row .extra {
    margin-left: 22px;
    width: 16px;
    height: 16px;
}
.row-end {
    position: absolute;
    right: 11px;
    top: 2px;
    display: flex;
    gap: 5px;
}
.row-end svg {
    width: 15px;
    height: 15px;
}
.lvl2::before {
    content: "";
    position: absolute;
    left: 30px;
    top: 0;
    bottom: 0;
    border-left: 1px dashed #666;
}
.properties {
    flex: 1;
    display: flex;
    flex-direction: column;
    min-height: 0;
    background-color: #303030;
    border-radius: 6px;
}
.props-head {
    height: 25px;
    padding: 0 9px 3px 9px;
    background-color: transparent;
    flex: none;
}
.props-search {
    width: 118px;
    margin-left: 64px;
}
.props-body {
    display: flex;
    flex: 1;
    min-height: 0;
}
.prop-tabs {
    display: flex;
    flex-direction: column;
    flex: none;
    width: 29px;
    padding-top: 7px;
    background-color: #1d1d1d;
    border-radius: 6px 0 0 0;
}
.ptab {
    display: flex;
    align-items: center;
    justify-content: center;
    width: 100%;
    height: 28px;
    padding-left: 3px;
    color: #c0c0c0;
}
.ptab.gap {
    margin-top: 8px;
}
.ptab.active {
    margin-left: 3px;
    width: 26px;
    padding-left: 0;
    background-color: #303030;
    border-radius: 4px 0 0 4px;
}
.prop-main {
    flex: 1;
    padding: 11px 9px 0 9px;
}
.crumb {
    display: flex;
    align-items: center;
    gap: 9px;
    height: 14px;
    color: #e4e4e4;
}
.crumb-name {
    margin-top: 2px;
}
.crumb .pin-ic {
    margin-right: 0;
}
.add-mod {
    position: relative;
    display: flex;
    align-items: center;
    justify-content: center;
    height: 18px;
    margin-top: 20px;
    padding-left: 18px;
    background-color: #545454;
    border-radius: 4px;
    color: #e0e0e0;
}
.add-label {
    margin-top: 2px;
}
.plus {
    position: absolute;
    left: 6px;
    top: 0;
    font-size: 18px;
    font-weight: 300;
}

/* status bar */
.status {
    display: flex;
    align-items: center;
    justify-content: flex-end;
    flex: none;
    height: 21px;
    padding-right: 13px;
    color: #a6a6a6;
    white-space: pre;
}
```
